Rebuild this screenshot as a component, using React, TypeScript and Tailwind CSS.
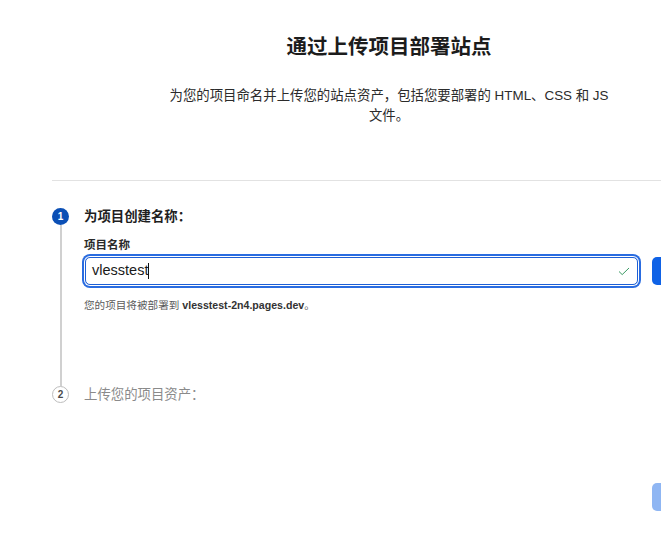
import React from "react";

const font = { fontFamily: '"Liberation Sans", "Noto Sans CJK SC", sans-serif' };

export default function App() {
  return (
    <div className="w-[661px] h-[537px] overflow-hidden bg-white" style={font}>
      <div className="w-[778px]">
        <div className="pt-[32px] flex flex-col items-center">
          <h1 className="text-[20.5px] leading-[30px] font-semibold text-[#1c1c1c]">通过上传项目部署站点</h1>
          <p className="mt-[24px] w-[450px] text-center text-[13.4px] leading-[20px] text-[#2b2b2b]">
            为您的项目命名并上传您的站点资产，包括您要部署的 HTML、CSS 和 JS 文件。
          </p>
        </div>

        <div className="ml-[52px] mt-[54px] w-[726px] h-px bg-[#e2e2e2]" />

        <div className="ml-[52px] w-[680px]">
          <div className="mt-[27px] flex">
            <div className="flex flex-col items-center w-[17px] shrink-0">
              <div className="w-[17px] h-[17px] rounded-full bg-[#0b4fb5] text-white text-[10px] font-bold flex items-center justify-center leading-none">
                1
              </div>
              <div className="w-[2px] flex-1 bg-[#d0d0d0]" />
            </div>
            <div className="ml-[15px] flex-1 pb-[74px]">
              <div className="text-[13.4px] leading-[17px] font-bold text-[#1f1f1f]">为项目创建名称：</div>
              <div className="mt-[13px] text-[11.5px] leading-[14px] font-bold text-[#2a2a2a]">项目名称</div>
              <div className="mt-[5px] flex items-center gap-[14px]">
                <div className="ml-px flex-1 h-[28px] rounded-[5px] border border-[#1d5fd6] shadow-[0_0_0_1px_#ffffff,0_0_0_3px_#2a6ce0] flex items-center pl-[6px] pr-[7px]">
                  <span className="text-[14.5px] text-[#1a1a1a]">vlesstest</span>
                  <span className="w-px h-[16px] bg-[#111]" />
                  <div className="flex-1" />
                  <svg width="12" height="9" viewBox="0 0 12 9" fill="none">
                    <polyline points="1,4.5 4.2,7.6 11,1" stroke="#3a9a63" strokeWidth="1" fill="none" />
                  </svg>
                </div>
                <button aria-label="创建项目" className="w-[80px] h-[28px] rounded-[5px] bg-[#0f62e6] shrink-0" />
              </div>
              <div className="mt-[13px] text-[10.6px] leading-[14px] text-[#5a5a5a]">
                您的项目将被部署到 <span className="font-bold text-[#333]">vlesstest-2n4.pages.dev</span>。
              </div>
            </div>
          </div>

          <div className="flex items-center">
            <div className="w-[17px] h-[17px] rounded-full border border-[#bdbdbd] text-[#4a4a4a] text-[10px] font-bold flex items-center justify-center leading-none shrink-0">
              2
            </div>
            <div className="ml-[15px] text-[13.4px] leading-[17px] text-[#8a8a8a]">上传您的项目资产：</div>
          </div>

          <div className="mt-[80px] flex justify-end">
            <button aria-label="部署站点" className="w-[80px] h-[28px] rounded-[5px] bg-[#8fb6f3]" />
          </div>
        </div>
      </div>
    </div>
  );
}
